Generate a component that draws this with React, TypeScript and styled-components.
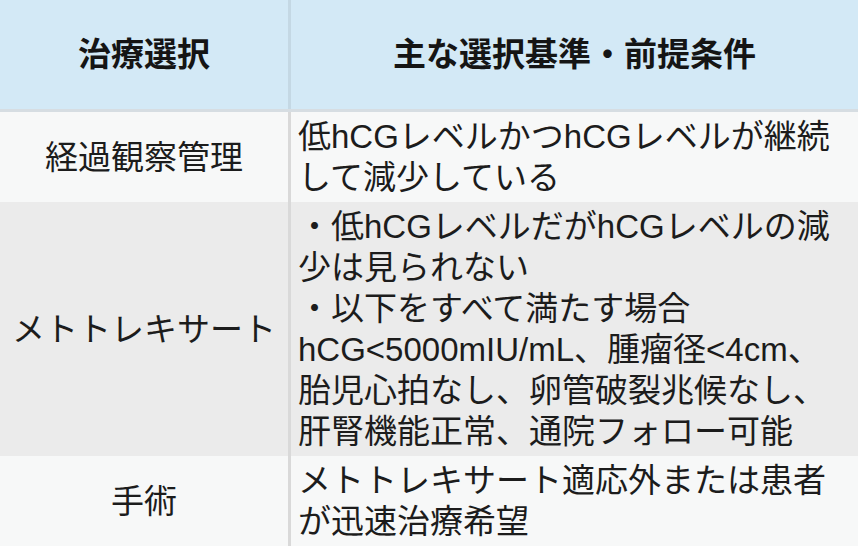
import React from 'react'
import styled, { createGlobalStyle } from 'styled-components'

const GlobalStyle = createGlobalStyle`
  html, body {
    margin: 0;
    padding: 0;
    background: #ffffff;
  }
  body {
    font-family: "Liberation Sans", "Noto Sans CJK JP", sans-serif;
    color: #1c1c1c;
  }
`

const Table = styled.table`
  width: 858px;
  border-collapse: collapse;
  table-layout: fixed;
  font-size: 33px;
  line-height: 41px;
`

const HeadCell = styled.th<{ $narrow?: boolean }>`
  width: ${({ $narrow }) => ($narrow ? '288px' : 'auto')};
  height: 109px;
  padding: 0;
  background: #d3e9f6;
  font-weight: 700;
  color: #151515;
  text-align: center;
  vertical-align: middle;
  border-bottom: 3px solid #d6dde2;
  & + & {
    border-left: 3px solid #c4d8e4;
  }
`

const Row = styled.tr<{ $shade?: boolean }>`
  background: ${({ $shade }) => ($shade ? '#ebebeb' : '#f7f8f8')};
  & + & > td {
    border-top: 3px solid #d9d9d9;
  }
`

const NameCell = styled.td`
  padding: 4px 0;
  text-align: center;
  vertical-align: middle;
  white-space: nowrap;
`

const CriteriaCell = styled.td`
  padding: 4px 4px 4px 7px;
  text-align: left;
  vertical-align: middle;
  border-left: 3px solid #d9d9d9;
`

const Line = styled.span`
  display: block;
  white-space: nowrap;
`

type Option = {
  name: string
  lines: string[]
  shade?: boolean
}

const options: Option[] = [
  {
    name: '経過観察管理',
    lines: ['低hCGレベルかつhCGレベルが継続', 'して減少している'],
  },
  {
    name: 'メトトレキサート',
    shade: true,
    lines: [
      '・低hCGレベルだがhCGレベルの減',
      '少は見られない',
      '・以下をすべて満たす場合',
      'hCG<5000mIU/mL、腫瘤径<4cm、',
      '胎児心拍なし、卵管破裂兆候なし、',
      '肝腎機能正常、通院フォロー可能',
    ],
  },
  {
    name: '手術',
    lines: ['メトトレキサート適応外または患者', 'が迅速治療希望'],
  },
]

export default function App() {
  return (
    <>
      <GlobalStyle />
      <Table>
        <thead>
          <tr>
            <HeadCell $narrow>治療選択</HeadCell>
            <HeadCell>主な選択基準・前提条件</HeadCell>
          </tr>
        </thead>
        <tbody>
          {options.map((o) => (
            <Row key={o.name} $shade={o.shade}>
              <NameCell>{o.name}</NameCell>
              <CriteriaCell>
                {o.lines.map((l) => (
                  <Line key={l}>{l}</Line>
                ))}
              </CriteriaCell>
            </Row>
          ))}
        </tbody>
      </Table>
    </>
  )
}
